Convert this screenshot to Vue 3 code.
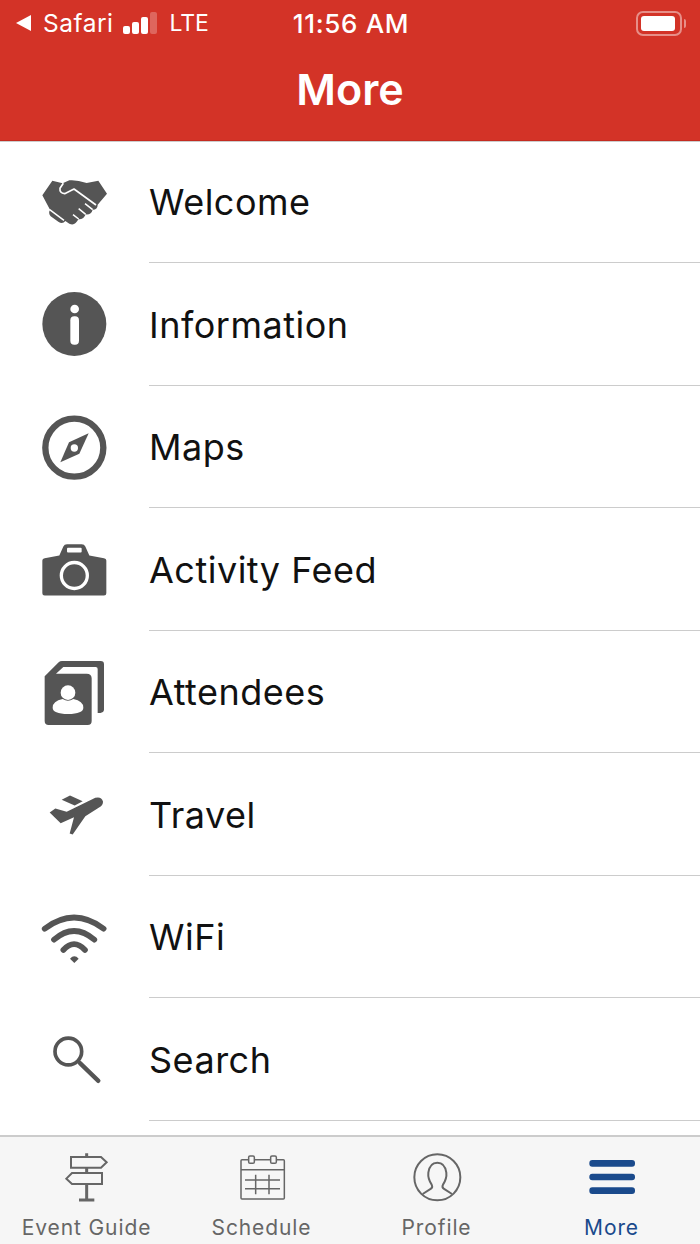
<script setup>
const menu = [
  { label: 'Welcome', icon: 'hand' },
  { label: 'Information', icon: 'info' },
  { label: 'Maps', icon: 'compass' },
  { label: 'Activity Feed', icon: 'camera' },
  { label: 'Attendees', icon: 'people' },
  { label: 'Travel', icon: 'plane' },
  { label: 'WiFi', icon: 'wifi' },
  { label: 'Search', icon: 'search' }
]
const tabs = [
  { label: 'Event Guide', icon: 'guide' },
  { label: 'Schedule', icon: 'schedule' },
  { label: 'Profile', icon: 'profile' },
  { label: 'More', icon: 'more', active: true }
]
</script>

<template>
  <div class="screen">
    <header class="top">
      <div class="status">
        <div class="status-left">
          <svg class="back" width="18" height="18" viewBox="0 0 18 18"><path d="M0 9 L15 1 V17 Z" fill="#fff" /></svg>
          <span class="carrier">Safari</span>
          <span class="bars"><i class="b1"></i><i class="b2"></i><i class="b3"></i><i class="b4"></i></span>
          <span class="net">LTE</span>
        </div>
        <div class="clock">11:56 AM</div>
        <div class="status-right">
          <span class="battery"><i></i></span>
          <span class="nub"></span>
        </div>
      </div>
      <h1>More</h1>
    </header>

    <ul class="menu">
      <li v-for="item in menu" :key="item.label" class="row">
        <span class="row-icon">
          <svg v-if="item.icon === 'hand'" width="72" height="72" viewBox="54 15 216 216">
            <path d="M67 103 L97 59 L128 67 L148 58 Q170 56 200 66 L235 59 L261 98 L233 131 Q233 146 218 146 Q214 162 197 160 Q192 176 175 175 Q165 196 148 188 L136 180 Q128 190 116 183 L92 166 Q84 156 90 146 Z" fill="#555" />
            <path d="M130 67 L120 82 Q118 96 134 98 L162 84 L228 132" fill="none" stroke="#fff" stroke-width="5" stroke-linejoin="round" />
            <path d="M88 145 L132 178 M176 174 L159 161 M197 160 L176 143 M218 146 L195 128" fill="none" stroke="#fff" stroke-width="4.5" />
          </svg>
          <svg v-else-if="item.icon === 'info'" width="72" height="72" viewBox="54 382 216 216">
            <circle cx="163" cy="490" r="96" fill="#555" />
            <circle cx="164" cy="445" r="13" fill="#fff" />
            <rect x="151" y="467" width="26" height="85" rx="12" fill="#fff" />
          </svg>
          <svg v-else-if="item.icon === 'compass'" width="72" height="72" viewBox="54 750 216 216">
            <circle cx="163" cy="860" r="87" fill="none" stroke="#555" stroke-width="19" />
            <path d="M206 817 L178 878 L121 904 L147 844 Z" fill="#555" />
            <circle cx="163" cy="861" r="11" fill="#fff" />
          </svg>
          <svg v-else-if="item.icon === 'camera'" width="72" height="72" viewBox="54 7.5 216 216">
            <path d="M67 90 Q67 84 74 83 L118 75 L130 48 Q133 41 141 41 H185 Q193 41 196 48 L208 75 L252 83 Q259 84 259 90 V188 Q259 195 252 195 H74 Q67 195 67 188 Z" fill="#555" />
            <rect x="141" y="52" width="44" height="14" rx="3" fill="#fff" />
            <circle cx="163" cy="135" r="39" fill="none" stroke="#fff" stroke-width="10" />
          </svg>
          <svg v-else-if="item.icon === 'people'" width="72" height="72" viewBox="54 375 216 216">
            <path d="M74 436 L116 394 Q120 390 126 390 H242 Q252 390 252 400 V536 Q252 546 233 546 V414 Q233 408 227 408 H130 L108 428 H200 Q215 428 215 442 V570 Q215 582 203 582 H86 Q74 582 74 570 Z" fill="#555" />
            <circle cx="144" cy="485" r="22" fill="#fff" />
            <path d="M98 530 Q98 510 128 504 Q144 514 160 504 Q190 510 190 530 Q190 548 144 549 Q98 548 98 530 Z" fill="#fff" />
          </svg>
          <svg v-else-if="item.icon === 'plane'" width="72" height="72" viewBox="54 742.5 216 216">
            <path d="M89 846 L106 834 L140 844 L226 802 Q244 797 249 813 Q250 824 236 832 L196 857 L158 912 L149 909 L162 860 L122 878 Z" fill="#555" />
            <path d="M125 808 L150 795 L188 812 L164 825 Z" fill="#555" />
          </svg>
          <svg v-else-if="item.icon === 'wifi'" width="72" height="72" viewBox="54 30 216 216">
            <path d="M74 113 Q162 46 251 113" fill="none" stroke="#555" stroke-width="17" stroke-linecap="round" />
            <path d="M102 146 Q162 94 223 146" fill="none" stroke="#555" stroke-width="17" stroke-linecap="round" />
            <path d="M130 177 Q162 142 195 177" fill="none" stroke="#555" stroke-width="17" stroke-linecap="round" />
            <path d="M150 203 Q163 189 176 203 L163 216 Z" fill="#555" />
          </svg>
          <svg v-else width="72" height="72" viewBox="54 397.5 216 216">
            <circle cx="145" cy="483" r="40" fill="none" stroke="#555" stroke-width="11" />
            <path d="M180 518 L235 571" fill="none" stroke="#555" stroke-width="13" stroke-linecap="round" />
          </svg>
        </span>
        <span class="row-label">{{ item.label }}</span>
      </li>
    </ul>

    <nav class="tabs">
      <div v-for="tab in tabs" :key="tab.label" class="tab" :class="{ active: tab.active }">
        <svg v-if="tab.icon === 'guide'" width="54" height="54" viewBox="180 122 162 162" fill="none" stroke="#666" stroke-width="6">
          <path d="M213 143 H303 L320 159 L303 175 H213 Z" />
          <path d="M306 191 H216 L199 208 L216 224 H306 Z" />
          <path d="M260 132 V143 M260 175 V191 M260 224 V270" stroke-width="9" />
          <path d="M237 272 H283" stroke-width="9" />
        </svg>
        <svg v-else-if="tab.icon === 'schedule'" width="54" height="54" viewBox="705 122 162 162" fill="none" stroke="#666" stroke-width="4.5">
          <rect x="723" y="151" width="130" height="118" rx="3" />
          <path d="M723 181 H853 M735 212 H840 M735 238 H840 M767 196 V255 M807 196 V255" />
          <rect x="746" y="140" width="17" height="22" rx="4" fill="#f6f6f6" />
          <rect x="812" y="140" width="17" height="22" rx="4" fill="#f6f6f6" />
        </svg>
        <svg v-else-if="tab.icon === 'profile'" width="54" height="54" viewBox="177 122 162 162" fill="none" stroke="#666" stroke-width="6">
          <circle cx="259" cy="204" r="69" />
          <path d="M215 254 L240 238 Q246 234 242 226 Q230 208 232 190 Q236 160 259 160 Q282 160 286 190 Q288 208 276 226 Q272 234 278 238 L303 254" />
        </svg>
        <svg v-else width="54" height="54" viewBox="702 122 162 162" fill="#1a4a8c">
          <rect x="715" y="152" width="137" height="20" rx="9" />
          <rect x="715" y="193" width="137" height="20" rx="9" />
          <rect x="715" y="234" width="137" height="20" rx="9" />
        </svg>
        <span>{{ tab.label }}</span>
      </div>
    </nav>
  </div>
</template>

<style>
html, body { margin: 0; background: #fff; }
</style>

<style scoped>
.screen {
  height: 1244px;
  width: 700px;
  display: flex;
  flex-direction: column;
  overflow: hidden;
  font-family: Inter, "Liberation Sans", sans-serif;
  background: #fff;
}

.top {
  height: 139.5px;
  flex-shrink: 0;
  background: #d33327;
  border-bottom: 1px solid #c42b20;
  box-shadow: 0 1px 0 #ccc;
  color: #fff;
}
.status {
  display: grid;
  grid-template-columns: 1fr auto 1fr;
  align-items: center;
  height: 46px;
  padding: 0 14px 0 16px;
  font-size: 24.5px;
}
.status-left { display: flex; align-items: center; gap: 10px; }
.back { margin-right: -1px; }
.carrier { letter-spacing: 0.5px; }
.net { font-size: 23px; margin-left: 2px; }
.bars { display: flex; align-items: flex-end; gap: 2px; height: 22px; }
.bars i { display: block; width: 7px; background: #fff; border-radius: 2px; }
.bars .b1 { height: 8px; }
.bars .b2 { height: 12px; }
.bars .b3 { height: 17px; }
.bars .b4 { height: 22px; background: rgba(255,255,255,0.25); }
.clock { font-size: 26px; font-weight: 500; letter-spacing: 0.7px; }
.status-right { display: flex; align-items: center; justify-content: flex-end; gap: 2px; }
.battery {
  box-sizing: border-box;
  width: 46px;
  height: 25px;
  padding: 3px;
  border: 2px solid rgba(255,255,255,0.45);
  border-radius: 7px;
  display: flex;
}
.battery i { display: block; width: 34px; background: #fff; border-radius: 3px; }
.nub { width: 2px; height: 9px; background: rgba(255,255,255,0.45); border-radius: 0 2px 2px 0; }
h1 {
  margin: 0;
  text-align: center;
  font-size: 43px;
  line-height: 87px;
  font-weight: 600;
}

.menu {
  flex: 1;
  list-style: none;
  margin: 0;
  padding: 0;
  overflow: hidden;
}
.row {
  height: 122.5px;
  display: flex;
  align-items: center;
}
.row-icon {
  box-sizing: border-box;
  width: 149px;
  padding-right: 1px;
  flex-shrink: 0;
  display: flex;
  justify-content: center;
}
.row-label {
  flex: 1;
  height: 100%;
  display: flex;
  align-items: center;
  box-sizing: border-box;
  padding-top: 2px;
  border-bottom: 1px solid #ccc;
  font-size: 36px;
  letter-spacing: 0.5px;
  color: #111;
}

.tabs {
  flex-shrink: 0;
  height: 107px;
  display: grid;
  grid-template-columns: repeat(4, 1fr);
  background: #f6f6f6;
  border-top: 2px solid #ccc;
}
.tab {
  display: flex;
  flex-direction: column;
  align-items: center;
  padding: 13px 2px 0 0;
  color: #666;
  font-size: 21px;
  letter-spacing: 0.9px;
}
.tab svg { flex-shrink: 0; }
.tab span { line-height: 28px; margin-top: 10px; }
.tab.active { color: #1a4a8c; }
</style>
